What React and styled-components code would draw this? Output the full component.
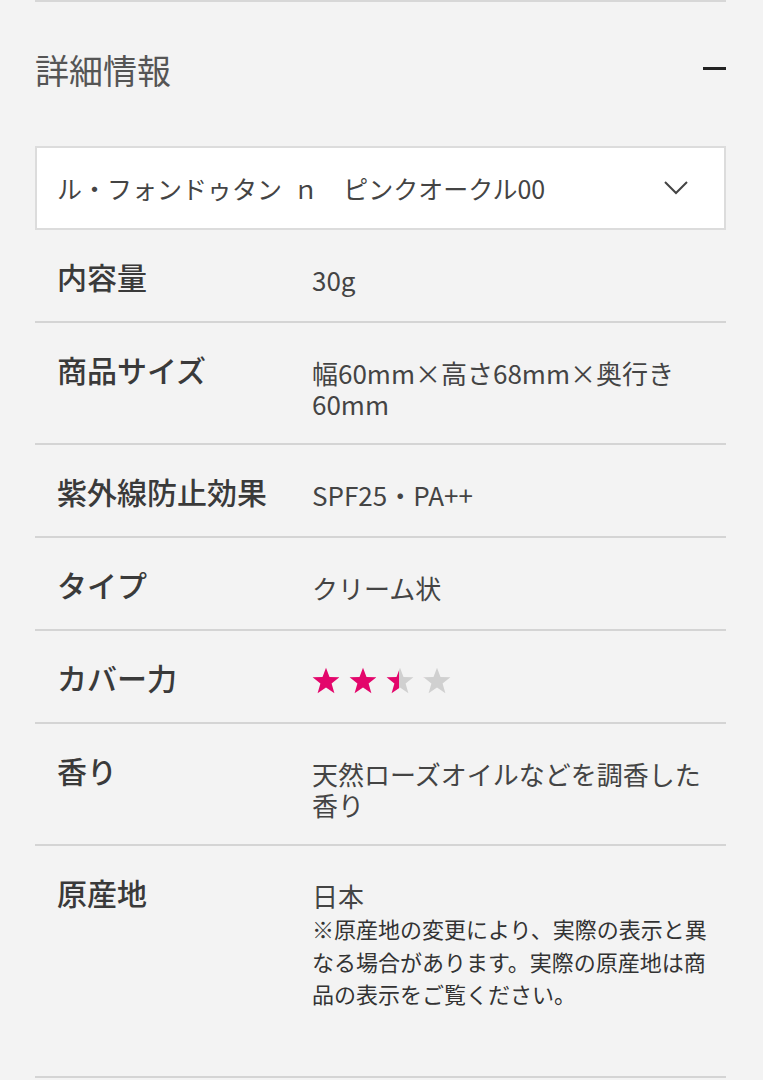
import React from "react";
import styled, { createGlobalStyle } from "styled-components";

const GlobalStyle = createGlobalStyle`
  html, body {
    margin: 0;
    padding: 0;
    background: #f3f3f3;
  }
  body {
    font-family: "Noto Sans CJK JP", "Noto Sans", sans-serif;
    color: #333;
  }
`;

const Page = styled.div`
  background: #f3f3f3;
  min-height: 1080px;
  padding: 0 37px 0 35px;
`;

const Section = styled.section`
  border-top: 2px solid #d7d7d7;
`;

const Header = styled.div`
  display: flex;
  align-items: center;
  justify-content: space-between;
  height: 136px;
`;

const Heading = styled.h2`
  margin: 0;
  font-size: 34px;
  font-weight: 400;
  color: #555;
  line-height: 1;
`;

const Minus = styled.span`
  display: block;
  width: 23px;
  height: 3px;
  background: #222;
  margin-top: -4px;
`;

const Select = styled.div`
  display: flex;
  align-items: center;
  justify-content: space-between;
  height: 84px;
  box-sizing: border-box;
  margin-top: 8px;
  padding: 0 36px 0 20px;
  background: #fff;
  border: 2px solid #dcdcdc;
  font-size: 25px;
  color: #444;
`;

const SelectText = styled.span`
  white-space: pre;
`;

const Row = styled.div`
  display: grid;
  grid-template-columns: 255px 1fr;
  padding: 26px 14px 24px 22px;
  border-bottom: 2px solid #d4d4d4;
`;

const Label = styled.div`
  font-size: 30px;
  font-weight: 500;
  line-height: 41px;
  color: #3a3a3a;
`;

const Value = styled.div`
  padding-top: 8px;
  font-size: 26px;
  line-height: 31px;
  color: #444;
`;

const Note = styled.p`
  margin: 1px 0 42px;
  font-size: 22px;
  line-height: 32.5px;
  color: #333;
`;

const Stars = styled.div`
  display: flex;
  align-items: center;
  gap: 9px;
  height: 31px;
`;

const StarIcon = ({ fill, id }) => (
  <svg width="28" height="27" viewBox="0 0 24 23">
    <defs>
      <linearGradient id={id}>
        <stop offset={`${fill * 100}%`} stopColor="#e3066b" />
        <stop offset={`${fill * 100}%`} stopColor="#d0d0d0" />
      </linearGradient>
    </defs>
    <polygon
      points="12,0.5 15,8.6 23.5,8.8 16.8,14.1 19.2,22.4 12,17.5 4.8,22.4 7.2,14.1 0.5,8.8 9,8.6"
      fill={`url(#${id})`}
    />
  </svg>
);

const Rating = ({ value }) => (
  <Stars>
    {[0, 1, 2, 3].map((i) => (
      <StarIcon key={i} id={`star-${i}`} fill={Math.max(0, Math.min(1, value - i))} />
    ))}
  </Stars>
);

const Chevron = () => (
  <svg width="24" height="14" viewBox="0 0 24 14">
    <polyline points="1,1 12,12 23,1" fill="none" stroke="#444" strokeWidth="2" />
  </svg>
);

const specs = [
  { label: "内容量", value: "30g" },
  { label: "商品サイズ", value: "幅60mm×高さ68mm×奥行き60mm" },
  { label: "紫外線防止効果", value: "SPF25・PA++" },
  { label: "タイプ", value: "クリーム状" },
  { label: "カバー力", rating: 2.45 },
  { label: "香り", value: "天然ローズオイルなどを調香した香り" },
  {
    label: "原産地",
    value: "日本",
    note: "※原産地の変更により、実際の表示と異なる場合があります。実際の原産地は商品の表示をご覧ください。",
  },
];

const App = () => {
  return (
    <Page>
      <GlobalStyle />
      <Section>
        <Header>
          <Heading>詳細情報</Heading>
          <Minus />
        </Header>
        <Select>
          <SelectText>{"ル・フォンドゥタン  ｎ　ピンクオークル00"}</SelectText>
          <Chevron />
        </Select>
        {specs.map((s) => (
          <Row key={s.label}>
            <Label>{s.label}</Label>
            <Value>
              {s.rating !== undefined ? <Rating value={s.rating} /> : s.value}
              {s.note && <Note>{s.note}</Note>}
            </Value>
          </Row>
        ))}
      </Section>
    </Page>
  );
};

export default App;
